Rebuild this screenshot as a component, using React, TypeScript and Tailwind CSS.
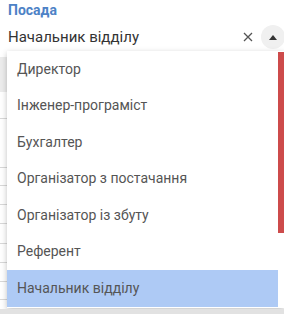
import { useState } from "react";

const options = [
  "Директор",
  "Інженер-програміст",
  "Бухгалтер",
  "Організатор з постачання",
  "Організатор із збуту",
  "Референт",
  "Начальник відділу",
];

// висоти рядків таблиці, що видно позаду списку
const rowHeights = [27, 49, 18, 19, 19, 20, 19, 19, 18];

export default function App() {
  const [value] = useState("Начальник відділу");

  return (
    <div className="relative w-[284px] h-[314px] overflow-hidden bg-white font-['Roboto','Liberation_Sans',sans-serif]">
      {/* поле вибору */}
      <div className="pl-2 pt-[2px]">
        <div className="text-[14px] leading-[17px] font-bold text-[#4d82c6]">Посада</div>
        <div className="flex items-center h-[30px] mt-[4px] border-b-2 border-[#3b70b4] ml-[-1px] pl-[1px]">
          <span className="flex-1 text-[15px] text-[#333]">{value}</span>
          <span className="w-[10px] mr-[8px] flex items-center">
            <svg width="10" height="10" viewBox="0 0 10 10">
              <path d="M1 1 L9 9 M9 1 L1 9" stroke="#555" strokeWidth="1.3" />
            </svg>
          </span>
          <span className="w-[24px] h-[24px] rounded-full bg-[#f0f0f0] flex items-center justify-center mr-[-1px]">
            <svg width="10" height="6" viewBox="0 0 10 6">
              <path d="M1 6 L5 1 L9 6 Z" fill="#333" />
            </svg>
          </span>
        </div>
      </div>

      {/* таблиця позаду */}
      <div className="mt-[4px] flex flex-col">
        <div className="h-[35px] bg-[#ececec]" />
        {rowHeights.map((h, i) => (
          <div key={i} className="border-b border-[#d8d8d8]" style={{ height: h }} />
        ))}
      </div>

      {/* випадаючий список */}
      <div className="absolute left-[7px] top-[51px] w-[277px] h-[257px] bg-white shadow-[0_2px_6px_rgba(0,0,0,0.25)] flex">
        <ul className="flex-1 flex flex-col">
          {options.map((o) => (
            <li
              key={o}
              className={
                "h-[36.5px] shrink-0 pl-[10px] flex items-center text-[14px] text-[#555] " +
                (o === value ? "bg-[#aecaf5]" : "")
              }
            >
              {o}
            </li>
          ))}
        </ul>
        <div className="w-[6px] pt-[1px]">
          <div className="h-[181px] bg-[#cd4b4b]" />
        </div>
      </div>
      <div className="absolute left-0 bottom-0 w-[284px] h-[5px] bg-[#e2e2e2]" />
    </div>
  );
}
